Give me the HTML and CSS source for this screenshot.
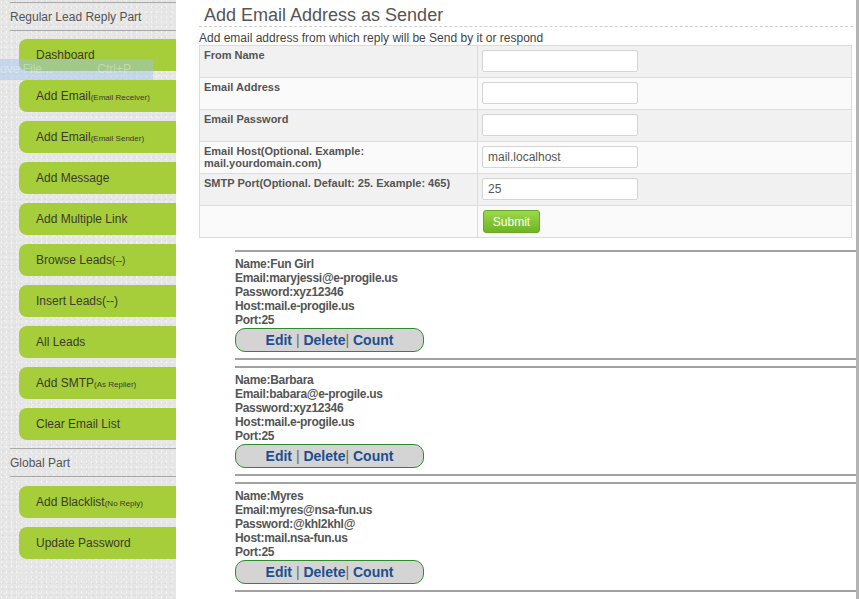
FILE: index.html
```html
<!DOCTYPE html>
<html lang="en">
<head>
    <meta charset="UTF-8">
    <title>Add Email Address as Sender</title>
    <link rel="stylesheet" href="styles.css">
</head>
<body>
    <div class="sidebar">
        <div class="side-title">Regular Lead Reply Part</div>
        <div class="nav">
            <a class="nav-btn" href="#">Dashboard</a>
            <a class="nav-btn" href="#">Add Email<small>(Email Receiver)</small></a>
            <a class="nav-btn" href="#">Add Email<small>(Email Sender)</small></a>
            <a class="nav-btn" href="#">Add Message</a>
            <a class="nav-btn" href="#">Add Multiple Link</a>
            <a class="nav-btn" href="#">Browse Leads<span class="dash">(--)</span></a>
            <a class="nav-btn" href="#">Insert Leads(--)</a>
            <a class="nav-btn" href="#">All Leads</a>
            <a class="nav-btn" href="#">Add SMTP<small>(As Replier)</small></a>
            <a class="nav-btn" href="#">Clear Email List</a>
        </div>
        <div class="side-title second">Global Part</div>
        <div class="nav second">
            <a class="nav-btn" href="#">Add Blacklist<small>(No Reply)</small></a>
            <a class="nav-btn" href="#">Update Password</a>
        </div>
        <div class="ghost-menu"><span>ove File...</span><span>Ctrl+P</span></div>
    </div>

    <div class="main">
        <h2 class="page-title">Add Email Address as Sender</h2>
        <p class="intro">Add email address from which reply will be Send by it or respond</p>

        <table class="form-table">
            <tr>
                <td class="label">From Name</td>
                <td><input type="text"></td>
            </tr>
            <tr>
                <td class="label">Email Address</td>
                <td><input type="text"></td>
            </tr>
            <tr>
                <td class="label">Email Password</td>
                <td><input type="text"></td>
            </tr>
            <tr>
                <td class="label">Email Host(Optional. Example:<br>mail.yourdomain.com)</td>
                <td><input type="text" value="mail.localhost"></td>
            </tr>
            <tr>
                <td class="label">SMTP Port(Optional. Default: 25. Example: 465)</td>
                <td><input type="text" value="25"></td>
            </tr>
            <tr>
                <td class="label"></td>
                <td><button class="submit">Submit</button></td>
            </tr>
        </table>

        <div class="entries">
            <div class="entry">
                <div>Name:Fun Girl</div>
                <div>Email:maryjessi@e-progile.us</div>
                <div>Password:xyz12346</div>
                <div>Host:mail.e-progile.us</div>
                <div>Port:25</div>
                <div class="actions"><a href="#">Edit</a> | <a href="#">Delete</a>| <a href="#">Count</a></div>
            </div>
            <div class="entry">
                <div>Name:Barbara</div>
                <div>Email:babara@e-progile.us</div>
                <div>Password:xyz12346</div>
                <div>Host:mail.e-progile.us</div>
                <div>Port:25</div>
                <div class="actions"><a href="#">Edit</a> | <a href="#">Delete</a>| <a href="#">Count</a></div>
            </div>
            <div class="entry">
                <div>Name:Myres</div>
                <div>Email:myres@nsa-fun.us</div>
                <div>Password:@khl2khl@</div>
                <div>Host:mail.nsa-fun.us</div>
                <div>Port:25</div>
                <div class="actions"><a href="#">Edit</a> | <a href="#">Delete</a>| <a href="#">Count</a></div>
            </div>
        </div>
    </div>
</body>
</html>
```

FILE: styles.css
```css
body {
    margin: 0;
    display: flex;
    height: 599px;
    overflow: hidden;
    background-color: #fff;
    font-family: "Liberation Sans", Arial, sans-serif;
}

/* left menu */
.sidebar {
    position: relative;
    width: 176px;
    flex-shrink: 0;
    padding-top: 2px;
    background-color: #e6e6e6;
    background-image:
        radial-gradient(circle at 30% 40%, rgba(255,255,255,0.5) 0.5px, transparent 1px),
        radial-gradient(circle at 70% 80%, rgba(255,255,255,0.45) 0.5px, transparent 1px),
        radial-gradient(circle at 50% 20%, rgba(205,205,205,0.4) 0.5px, transparent 1px);
    background-size: 5px 5px, 7px 7px, 6px 6px;
}
.side-title {
    margin-left: 10px;
    height: 27px;
    line-height: 28px;
    border-top: 1px solid #a8a8a8;
    border-bottom: 1px solid #a8a8a8;
    font-size: 12px;
    color: #555;
}
.side-title.second {
    margin-top: 8px;
}
.nav {
    display: flex;
    flex-direction: column;
    gap: 9px;
    margin: 8px 0 0 19px;
}
.nav.second {
    margin-top: 9px;
}
.nav-btn {
    display: block;
    height: 32px;
    line-height: 32px;
    padding-left: 17px;
    background-color: #a6cd3a;
    border-radius: 8px 0 0 8px;
    font-size: 12px;
    color: #3c3c28;
    text-decoration: none;
    white-space: nowrap;
}
.nav-btn small {
    font-size: 8px;
}
.nav-btn .dash {
    font-size: 10px;
}
.ghost-menu {
    position: absolute;
    left: 0;
    top: 59px;
    width: 153px;
    height: 21px;
    display: flex;
    justify-content: space-between;
    padding-right: 22px;
    box-sizing: border-box;
    line-height: 21px;
    background-color: rgba(160, 195, 240, 0.45);
    font-size: 12px;
    color: rgba(255, 255, 255, 0.35);
}

/* content */
.main {
    flex: 1;
    padding-left: 23px;
    border-right: 3px solid #b4b4b4;
    margin-right: 2px;
}
.page-title {
    margin: 4px 3px 0 0;
    padding: 0 0 1px 5px;
    height: 21px;
    line-height: 22px;
    border-bottom: 1px dashed #cfcfcf;
    font-size: 18px;
    font-weight: normal;
    color: #555;
}
.intro {
    margin: 4px 0 0;
    font-size: 12px;
    line-height: 14px;
    color: #444;
}
.form-table {
    width: 653px;
    border-collapse: collapse;
}
.form-table td {
    height: 32px;
    padding: 4px;
    border: 1px solid #dcdcdc;
    vertical-align: top;
    box-sizing: border-box;
}
.form-table tr:nth-child(odd) td {
    background-color: #f1f1f1;
}
.form-table tr:nth-child(even) td {
    background-color: #fafafa;
}
.form-table .label {
    width: 278px;
    padding-top: 3px;
    font-size: 11px;
    line-height: 12px;
    font-weight: bold;
    color: #555;
}
.form-table input {
    display: block;
    box-sizing: border-box;
    width: 156px;
    height: 22px;
    margin: 0;
    padding: 0 5px;
    border: 1px solid #d4d4d4;
    border-radius: 2px;
    background: #fff;
    font-family: "Liberation Sans", Arial, sans-serif;
    font-size: 12px;
    color: #555;
}
.submit {
    display: block;
    width: 57px;
    height: 23px;
    margin: 0 0 0 1px;
    padding: 0;
    border: 1px solid #6aa829;
    border-radius: 3px;
    background: linear-gradient(#9bd94a, #6db522);
    font-family: "Liberation Sans", Arial, sans-serif;
    font-size: 12px;
    color: #fff;
}

/* saved senders */
.entries {
    margin: 12px 0 0 36px;
}
.entry {
    margin-bottom: 6px;
    padding: 5px 0 6px;
    border-top: 2px solid #a2a2a2;
    border-bottom: 2px solid #a2a2a2;
    font-size: 12px;
    line-height: 14px;
    font-weight: bold;
    letter-spacing: -0.3px;
    color: #555;
}
.actions {
    box-sizing: border-box;
    width: 189px;
    height: 24px;
    margin-top: 1px;
    line-height: 22px;
    text-align: center;
    border: 1px solid #2f8a2f;
    border-radius: 10px;
    background-color: #d4d4d4;
    font-size: 14px;
    letter-spacing: 0;
    color: #6a6a6a;
    font-weight: normal;
}
.actions a {
    color: #1d4e8f;
    font-weight: bold;
    text-decoration: none;
}
```
